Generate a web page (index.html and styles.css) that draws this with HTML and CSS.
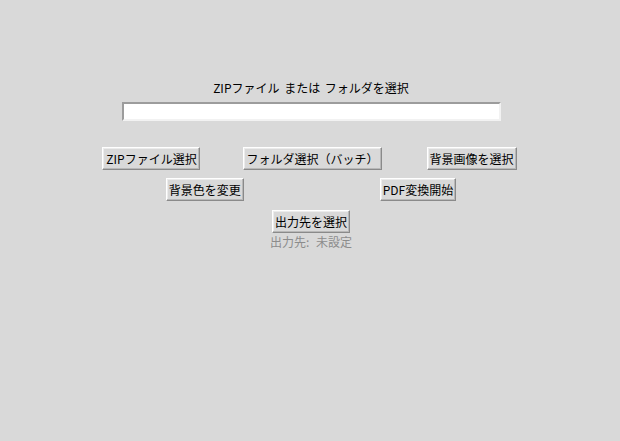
FILE: index.html
```html
<!DOCTYPE html>
<html lang="ja">
<head>
<meta charset="utf-8">
<title>ZIP to PDF</title>
<link rel="stylesheet" href="styles.css">
</head>
<body>
<div class="app">
  <div class="title">ZIPファイル または フォルダを選択</div>
  <input class="path-entry" type="text" value="">
  <div class="row row-1">
    <button class="btn btn-zip">ZIPファイル選択</button>
    <button class="btn">フォルダ選択（バッチ）</button>
    <button class="btn">背景画像を選択</button>
  </div>
  <div class="row row-2">
    <button class="btn">背景色を変更</button>
    <button class="btn">PDF変換開始</button>
  </div>
  <div class="row row-3">
    <button class="btn">出力先を選択</button>
  </div>
  <div class="out-label">出力先: 未設定</div>
</div>
</body>
</html>
```

FILE: styles.css
```css
html, body {
  margin: 0;
  padding: 0;
  background: #d9d9d9;
}
body {
  width: 620px;
  height: 441px;
  overflow: hidden;
  font-family: "Noto Sans CJK JP", "DejaVu Sans", sans-serif;
  font-size: 12px;
  color: #000;
}
.app {
  box-sizing: border-box;
  width: 620px;
  padding-top: 79px;
  padding-left: 2px;
  display: flex;
  flex-direction: column;
  align-items: center;
}
.title {
  height: 17px;
  line-height: 17px;
  word-spacing: 2px;
  white-space: nowrap;
}
.path-entry {
  box-sizing: border-box;
  margin: 6px 0 0 0;
  width: 379px;
  height: 19px;
  padding: 0 2px;
  background: #fff;
  border-style: solid;
  border-width: 2px;
  border-color: #9c9c9c #f2f2f2 #f2f2f2 #9c9c9c;
  font: inherit;
  outline: none;
}
.row {
  display: flex;
}
.row-1 {
  margin-top: 26px;
  margin-right: 3px;
}
.row-1 .btn + .btn {
  margin-left: 45px;
}
.row-1 .btn-zip + .btn {
  margin-left: 43px;
}
.row-2 {
  margin-top: 8px;
  gap: 136px;
}
.row-3 {
  margin-top: 9px;
}
.btn {
  box-sizing: border-box;
  height: 23px;
  padding: 0 2px;
  margin: 0;
  background: #d9d9d9;
  color: #000;
  font: inherit;
  line-height: 17px;
  border-style: solid;
  border-width: 1px;
  border-color: #ffffff #8a8a8a #8a8a8a #ffffff;
  box-shadow: inset -1px -1px 0 #b8b8b8, inset 1px 1px 0 #ececec;
  white-space: nowrap;
  cursor: pointer;
}
.btn-zip {
  min-width: 98px;
}
.out-label {
  height: 17px;
  line-height: 17px;
  color: #8c8c8c;
  word-spacing: 4px;
  white-space: nowrap;
}
```
